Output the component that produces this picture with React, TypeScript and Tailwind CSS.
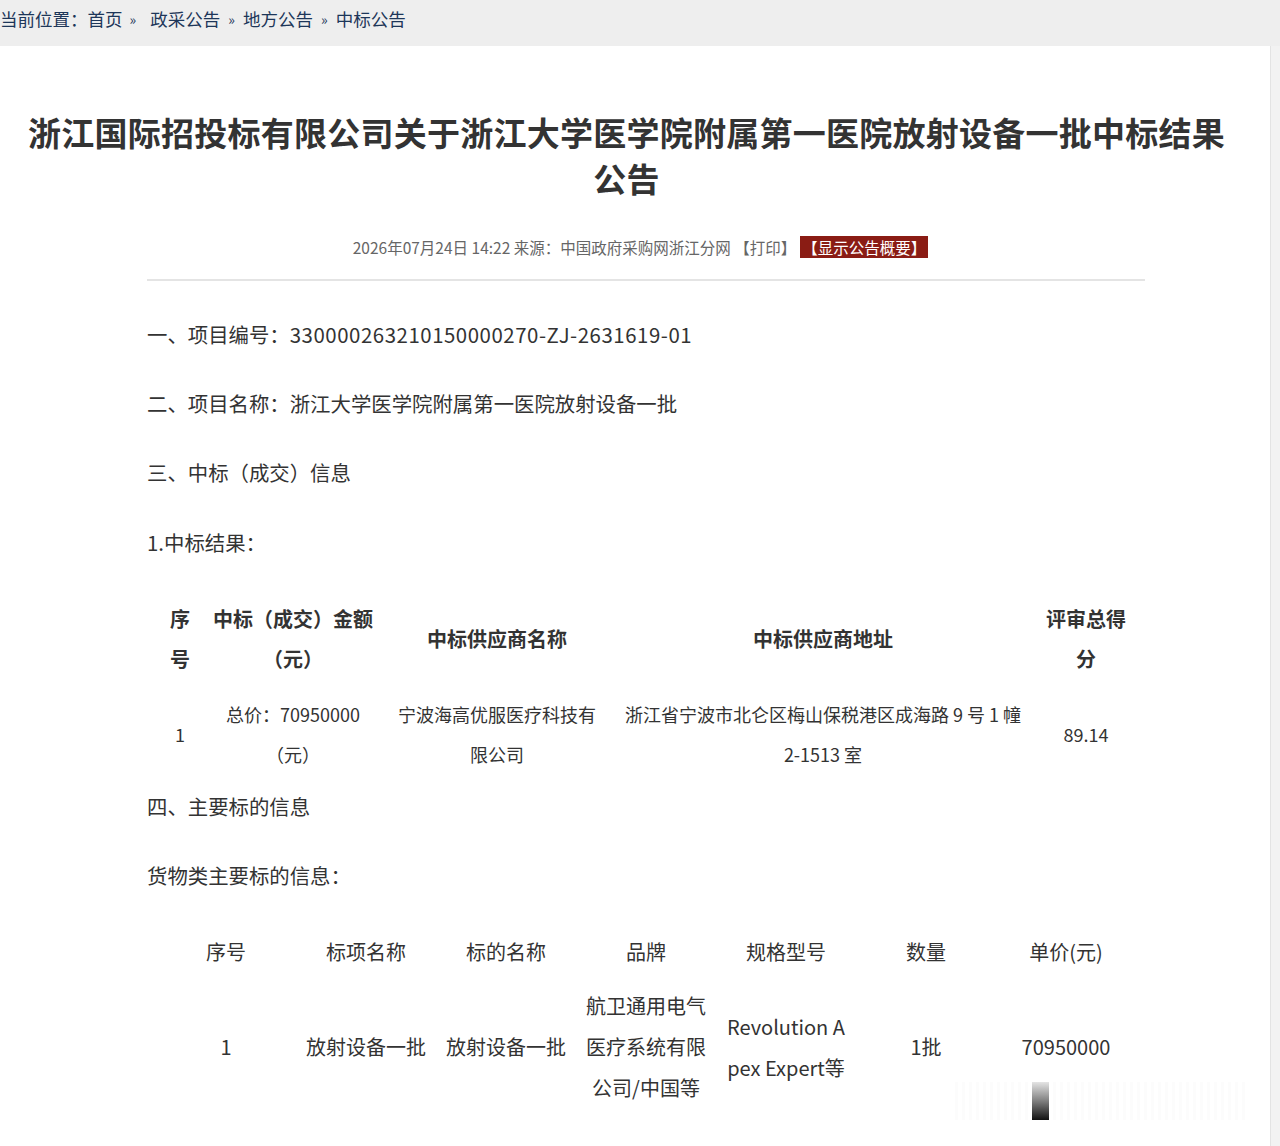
const FONT = "font-['Noto_Sans_CJK_SC','Noto_Sans',sans-serif]"

const crumbs = ['首页', '政采公告', '地方公告', '中标公告']

const goods = {
  head: ['序号', '标项名称', '标的名称', '品牌', '规格型号', '数量', '单价(元)'],
  row: [
    ['1'],
    ['放射设备一批'],
    ['放射设备一批'],
    ['航卫通用电气', '医疗系统有限', '公司/中国等'],
    ['Revolution A', 'pex Expert等'],
    ['1批'],
    ['70950000'],
  ],
}

export default function App() {
  return (
    <div className={`${FONT} relative h-[1146px] overflow-hidden bg-[#f2f2f2]`}>
      {/* breadcrumb */}
      <div className="flex h-[46px] items-center bg-[#eeeeee] pb-[8px] text-[17.5px] text-[#1d3659]">
        <span>当前位置：</span>
        {crumbs.map((c, i) => (
          <span key={c} className="flex items-center">
            {i > 0 && <span className={`text-[14px] ${i === 1 ? 'ml-[7px] mr-[14px]' : 'mx-[8px]'}`}>»</span>}
            <span>{c}</span>
          </span>
        ))}
      </div>

      <div className="h-[1100px] w-[1271px] border-r border-[#e3e3e3] bg-white">
        <h1 className="pr-[17px] pt-[63px] text-center text-[33px] font-bold leading-[46px] tracking-[0.25px] text-[#333]">
          浙江国际招投标有限公司关于浙江大学医学院附属第一医院放射设备一批中标结果
          <br />
          公告
        </h1>

        <div className="mt-[34px] flex items-center justify-center pl-[11px] text-[15.5px] leading-[24px] text-[#666]">
          <span>2026年07月24日 14:22 来源：中国政府采购网浙江分网 【打印】</span>
          <span className="ml-[4px] bg-[#8a1c14] px-[2px] leading-[22px] text-white">【显示公告概要】</span>
        </div>

        <div className="ml-[147px] w-[1000px]">
          <div className="mt-[20px] h-[2px] w-[998px] bg-[#e4e4e4]" />

          <div className="text-[20.4px] leading-[30px] text-[#333]">
            <p className="mt-[38px]">
              一、项目编号：<span className="tracking-[0.55px]">330000263210150000270-ZJ-2631619-01</span>
            </p>
            <p className="mt-[39px]">二、项目名称：浙江大学医学院附属第一医院放射设备一批</p>
            <p className="mt-[39px]">三、中标（成交）信息</p>
            <p className="mt-[40px]">1.中标结果：</p>
          </div>

          {/* winning bid table */}
          <table className="mt-[42px] w-[1000px] table-fixed border-collapse text-center text-[#333]">
            <colgroup>
              <col className="w-[66px]" />
              <col className="w-[160px]" />
              <col className="w-[248px]" />
              <col className="w-[404px]" />
              <col className="w-[122px]" />
            </colgroup>
            <thead>
              <tr className="text-[20px] font-bold leading-[40px]">
                <th className="pb-[15px] align-middle">序<br />号</th>
                <th className="whitespace-nowrap pb-[15px] align-middle">中标（成交）金额<br />（元）</th>
                <th className="pb-[15px] align-middle">中标供应商名称</th>
                <th className="pb-[15px] align-middle">中标供应商地址</th>
                <th className="whitespace-nowrap pb-[15px] align-middle">评审总得<br />分</th>
              </tr>
            </thead>
            <tbody>
              <tr className="text-[18px] leading-[40px]">
                <td className="align-middle">1</td>
                <td className="whitespace-nowrap align-middle">总价：70950000<br />（元）</td>
                <td className="whitespace-nowrap align-middle">宁波海高优服医疗科技有<br />限公司</td>
                <td className="whitespace-nowrap align-middle">浙江省宁波市北仑区梅山保税港区成海路 9 号 1 幢<br />2-1513 室</td>
                <td className="align-middle">89.14</td>
              </tr>
            </tbody>
          </table>

          <div className="text-[20.4px] leading-[30px] text-[#333]">
            <p className="mt-[17px]">四、主要标的信息</p>
            <p className="mt-[39px]">货物类主要标的信息：</p>
          </div>

          {/* goods table */}
          <table className="ml-[9px] mt-[41px] w-[980px] table-fixed border-collapse text-center text-[20px] leading-[41px] text-[#333]">
            <thead>
              <tr>
                {goods.head.map(h => (
                  <th key={h} className="pb-[13px] font-normal">{h}</th>
                ))}
              </tr>
            </thead>
            <tbody>
              <tr>
                {goods.row.map((lines, i) => (
                  <td key={i} className="whitespace-nowrap align-middle">
                    {lines.map((l, j) => (
                      <div key={j}>{l}</div>
                    ))}
                  </td>
                ))}
              </tr>
            </tbody>
          </table>
        </div>
      </div>

      {/* faint stamp mark in the corner */}
      <div className="absolute left-[955px] top-[1082px] h-[38px] w-[290px] bg-[repeating-linear-gradient(90deg,rgba(0,0,0,0.012)_0px,rgba(0,0,0,0.012)_3px,transparent_3px,transparent_7px)]" />
      <div className="absolute left-[1032px] top-[1082px] h-[38px] w-[17px] bg-[linear-gradient(180deg,#e4e4e4,#8a8a8a_45%,#111)]" />
    </div>
  )
}
